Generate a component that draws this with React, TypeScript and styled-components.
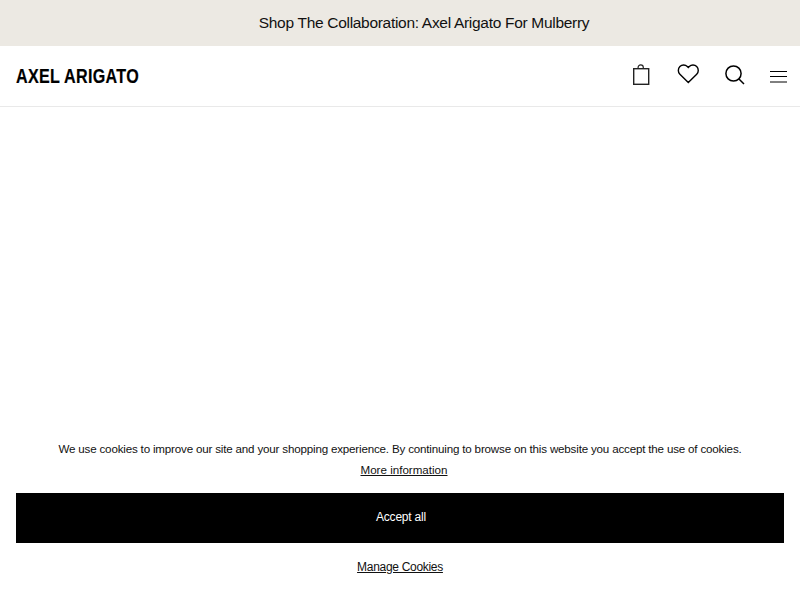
import React from "react";
import styled, { createGlobalStyle } from "styled-components";

const GlobalStyle = createGlobalStyle`
  html, body {
    margin: 0;
    padding: 0;
    height: 100%;
    background: #ffffff;
    font-family: "Liberation Sans", Arial, sans-serif;
    color: #000000;
  }
  #root {
    height: 100%;
  }
`;

const Page = styled.div`
  display: flex;
  flex-direction: column;
  height: 600px;
  overflow: hidden;
`;

const Banner = styled.div`
  display: flex;
  align-items: center;
  justify-content: center;
  height: 46px;
  padding-left: 48px;
  background-color: #ece9e3;
  font-size: 15.5px;
  letter-spacing: -0.3px;
  color: #111111;
`;

const Header = styled.header`
  display: flex;
  align-items: center;
  justify-content: space-between;
  height: 60px;
  padding: 0 11px 0 16px;
  border-bottom: 1px solid #e9e9e9;
`;

const Logo = styled.div`
  font-size: 20.5px;
  font-weight: 700;
  letter-spacing: 0.4px;
  line-height: 1;
  padding-top: 1px;
  -webkit-text-stroke: 0.2px #000000;
  transform: scaleX(0.785);
  transform-origin: left center;
`;

const Icons = styled.nav`
  display: flex;
  align-items: center;
  gap: 22px;
`;

const IconButton = styled.button<{ $lift?: number }>`
  display: flex;
  padding: 0;
  border: 0;
  background: none;
  cursor: pointer;
  margin-bottom: ${({ $lift }) => $lift ?? 0}px;
`;

const CookieBar = styled.section`
  display: flex;
  flex-direction: column;
  align-items: stretch;
  margin-top: auto;
  padding: 0 16px 26px;
`;

const CookieText = styled.p`
  margin: 0;
  font-size: 11.6px;
  letter-spacing: -0.18px;
  line-height: 14px;
  text-align: center;
  color: #111111;
`;

const MoreLink = styled.a`
  display: block;
  margin: 7px 0 16px 8px;
  font-size: 11.6px;
  line-height: 14px;
  text-align: center;
  color: #111111;
  text-decoration: underline;
`;

const AcceptButton = styled.button`
  height: 50px;
  padding: 0 0 2px 2px;
  border: 0;
  background-color: #000000;
  color: #ffffff;
  font-family: inherit;
  font-size: 12px;
  letter-spacing: -0.2px;
  cursor: pointer;
`;

const ManageLink = styled.a`
  display: block;
  margin-top: 17px;
  font-size: 12px;
  letter-spacing: -0.3px;
  line-height: 14px;
  text-align: center;
  color: #111111;
  text-decoration: underline;
`;

const App = () => {
  return (
    <Page>
      <GlobalStyle />
      <Banner>Shop The Collaboration: Axel Arigato For Mulberry</Banner>
      <Header>
        <Logo>AXEL ARIGATO</Logo>
        <Icons>
          <IconButton aria-label="Bag">
            <svg width="24" height="24" viewBox="0 0 24 24" fill="none" stroke="#222" strokeWidth="1.4">
              <rect x="2.7" y="4.7" width="15" height="15.6" />
              <path d="M7.1 4.7V3.4a2.6 2.6 0 0 1 5.2 0v1.3" strokeWidth="1.2" />
            </svg>
          </IconButton>
          <IconButton aria-label="Wishlist" $lift={4}>
            <svg width="24" height="24" viewBox="0.7 0 24 24" fill="none" stroke="#000" strokeWidth="1.4">
              <path d="M12 20.5 3.6 12.2a5.4 5.4 0 0 1 0-7.6 5.2 5.2 0 0 1 7.4 0l1 1 1-1a5.2 5.2 0 0 1 7.4 0 5.4 5.4 0 0 1 0 7.6z" />
            </svg>
          </IconButton>
          <IconButton aria-label="Search" $lift={4}>
            <svg width="24" height="24" viewBox="0 0 24 24" fill="none" stroke="#000" strokeWidth="1.5">
              <circle cx="10.5" cy="11.5" r="7.6" />
              <path d="M16 17l5 5" />
            </svg>
          </IconButton>
          <IconButton aria-label="Menu">
            <svg width="20" height="24" viewBox="0 0 20 24" fill="none" stroke="#000" strokeWidth="1">
              <path d="M1 7.5h17M1 12.5h17M1 18h17" />
            </svg>
          </IconButton>
        </Icons>
      </Header>
      <CookieBar>
        <CookieText>
          We use cookies to improve our site and your shopping experience. By continuing to browse on this website you accept the use of cookies.
        </CookieText>
        <MoreLink>More information</MoreLink>
        <AcceptButton>Accept all</AcceptButton>
        <ManageLink>Manage Cookies</ManageLink>
      </CookieBar>
    </Page>
  );
};

export default App;
